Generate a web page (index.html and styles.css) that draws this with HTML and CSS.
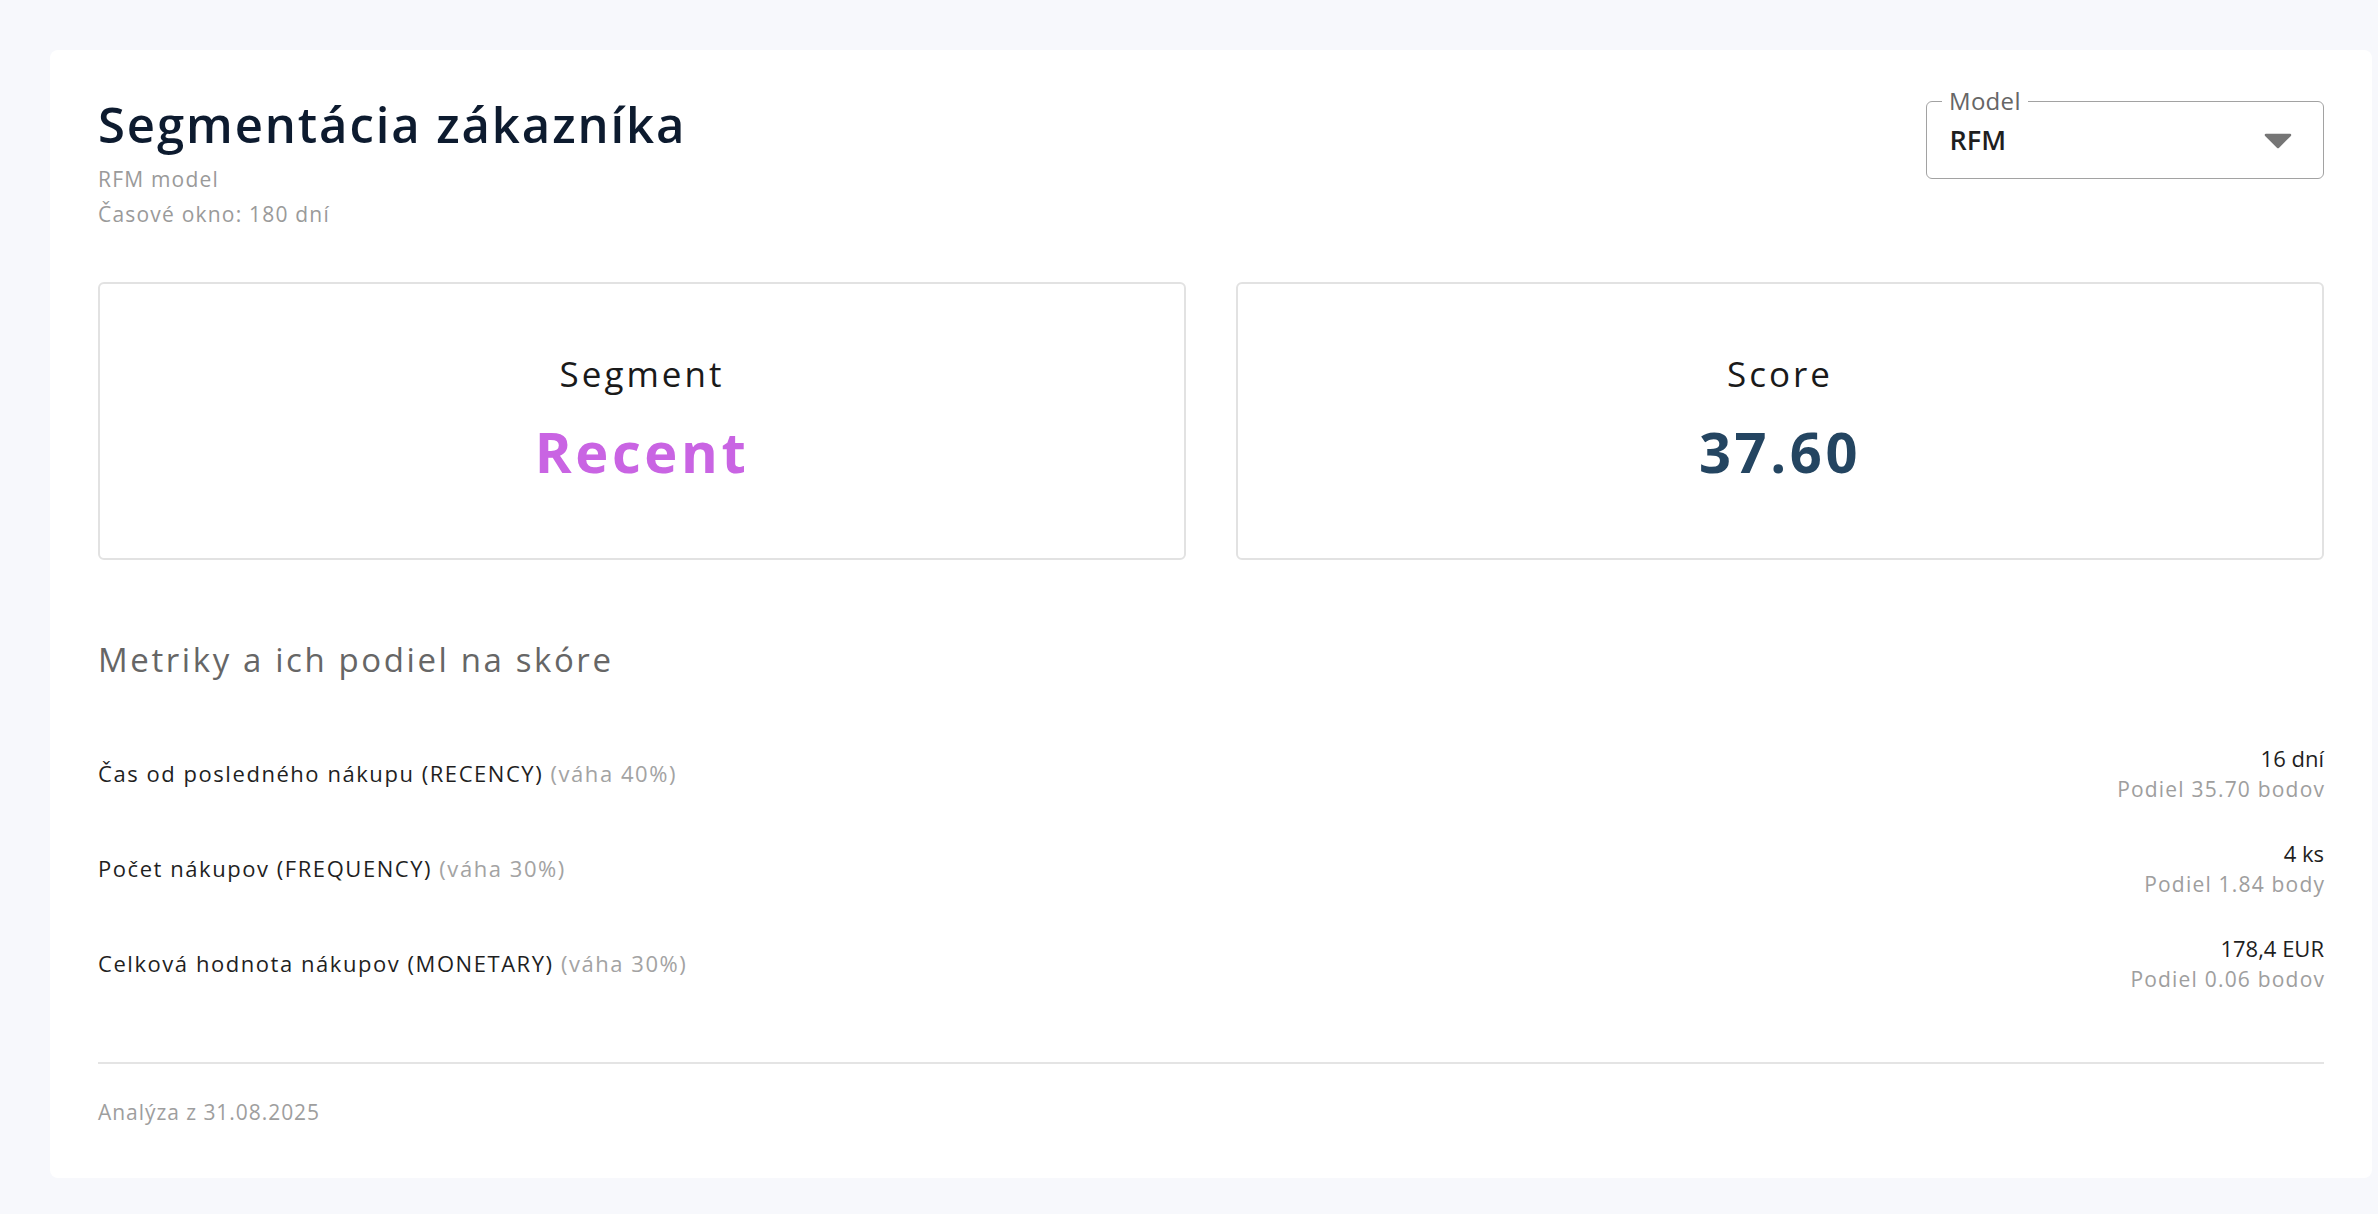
FILE: index.html
```html
<!DOCTYPE html>
<html lang="sk">
<head>
<meta charset="utf-8">
<title>Segmentácia zákazníka</title>
<link rel="stylesheet" href="styles.css">
</head>
<body>
<div class="page">
  <div class="card">
    <header class="head">
      <div class="head-text">
        <h1 class="title">Segmentácia zákazníka</h1>
        <p class="sub">RFM model</p>
        <p class="sub">Časové okno: 180 dní</p>
      </div>
      <div class="select">
        <span class="select-label">Model</span>
        <span class="select-value">RFM</span>
        <svg class="select-arrow" width="28" height="16" viewBox="0 0 28 16" aria-hidden="true">
          <path d="M2 2 L26 2 L14 14 Z" fill="#767676" stroke="#767676" stroke-width="2.5" stroke-linejoin="round"/>
        </svg>
      </div>
    </header>

    <section class="stats">
      <div class="stat">
        <div class="stat-label">Segment</div>
        <div class="stat-value stat-value-purple">Recent</div>
      </div>
      <div class="stat">
        <div class="stat-label">Score</div>
        <div class="stat-value stat-value-navy">37.60</div>
      </div>
    </section>

    <h2 class="section-title">Metriky a ich podiel na skóre</h2>

    <ul class="metrics">
      <li class="metric">
        <div class="metric-label">Čas od posledného nákupu (RECENCY) <span class="metric-weight">(váha 40%)</span></div>
        <div class="metric-vals">
          <div class="metric-value">16 dní</div>
          <div class="metric-sub">Podiel 35.70 bodov</div>
        </div>
      </li>
      <li class="metric">
        <div class="metric-label">Počet nákupov (FREQUENCY) <span class="metric-weight">(váha 30%)</span></div>
        <div class="metric-vals">
          <div class="metric-value">4 ks</div>
          <div class="metric-sub">Podiel 1.84 body</div>
        </div>
      </li>
      <li class="metric">
        <div class="metric-label">Celková hodnota nákupov (MONETARY) <span class="metric-weight">(váha 30%)</span></div>
        <div class="metric-vals">
          <div class="metric-value">178,4 EUR</div>
          <div class="metric-sub">Podiel 0.06 bodov</div>
        </div>
      </li>
    </ul>

    <hr class="divider">
    <p class="foot">Analýza z 31.08.2025</p>
  </div>
</div>
</body>
</html>
```

FILE: styles.css
```css
* {
  box-sizing: border-box;
}

html, body {
  margin: 0;
  padding: 0;
  background: #f7f8fc;
}

body {
  font-family: "Open Sans", "Noto Sans", "DejaVu Sans", sans-serif;
  color: #1f1f1f;
}

.page {
  padding: 50px 6px 35px 50px;
}

.card {
  background: #ffffff;
  border-radius: 8px;
  padding: 48px;
}

/* Header */
.head {
  display: flex;
  justify-content: space-between;
  align-items: flex-start;
}

.title {
  margin: 0;
  font-size: 49px;
  line-height: 52px;
  font-weight: 600;
  letter-spacing: 1.9px;
  color: #0d1b2f;
}

.sub {
  margin: 0;
  font-size: 21px;
  line-height: 35px;
  font-weight: 400;
  letter-spacing: 1.2px;
  color: #9a9a9a;
}

.title + .sub {
  margin-top: 12px;
}

.select {
  position: relative;
  margin-top: 3px;
  width: 398px;
  height: 78px;
  border: 1.5px solid #a2a2a2;
  border-radius: 6px;
  padding: 0 31.5px 0 22.5px;
  display: flex;
  align-items: center;
  justify-content: space-between;
}

.select-label {
  position: absolute;
  left: 15px;
  top: -13px;
  padding: 0 7px;
  background: #ffffff;
  font-size: 24px;
  line-height: 24px;
  font-weight: 500;
  letter-spacing: 0.3px;
  color: #666666;
}

.select-value {
  font-size: 27px;
  line-height: 36px;
  font-weight: 600;
  color: #1f1f1f;
}

.select-arrow {
  display: block;
  margin-top: 2px;
}

/* Stat cards */
.stats {
  margin-top: 50px;
  display: grid;
  grid-template-columns: 1fr 1fr;
  gap: 50px;
}

.stat {
  height: 278px;
  border: 2px solid #e2e2e2;
  border-radius: 6px;
  display: flex;
  flex-direction: column;
  align-items: center;
  justify-content: center;
  padding-bottom: 6px;
}

.stat-label {
  font-size: 35px;
  line-height: 48px;
  font-weight: 400;
  letter-spacing: 3px;
  color: #1a1a1a;
}

.stat-value {
  margin-top: 17px;
  font-size: 56px;
  line-height: 72px;
  font-weight: 700;
  letter-spacing: 3.6px;
}

.stat-value-purple {
  color: #c964e3;
}

.stat-value-navy {
  color: #244561;
}

/* Metrics */
.section-title {
  margin: 78px 0 0;
  font-size: 33px;
  line-height: 44px;
  font-weight: 400;
  letter-spacing: 2.6px;
  color: #666666;
}

.metrics {
  list-style: none;
  margin: 44px 0 0;
  padding: 0;
}

.metric {
  display: flex;
  justify-content: space-between;
  align-items: center;
  padding: 16px 0;
}

.metric-label {
  font-size: 22px;
  line-height: 33px;
  font-weight: 400;
  letter-spacing: 1.55px;
  color: #1f1f1f;
}

.metric-weight {
  color: #a3a3a3;
}

.metric-vals {
  text-align: right;
}

.metric-value {
  font-size: 22px;
  line-height: 32px;
  font-weight: 500;
  color: #1f1f1f;
}

.metric-sub {
  font-size: 21px;
  line-height: 31px;
  font-weight: 400;
  letter-spacing: 1.2px;
  margin-right: -1.2px;
  color: #9e9e9e;
}

.divider {
  margin: 51px 0 0;
  border: 0;
  border-top: 2px solid #e4e4e4;
  height: 0;
}

.foot {
  margin: 31px 0 0;
  font-size: 21px;
  line-height: 35px;
  letter-spacing: 0.95px;
  color: #9e9e9e;
}
```
